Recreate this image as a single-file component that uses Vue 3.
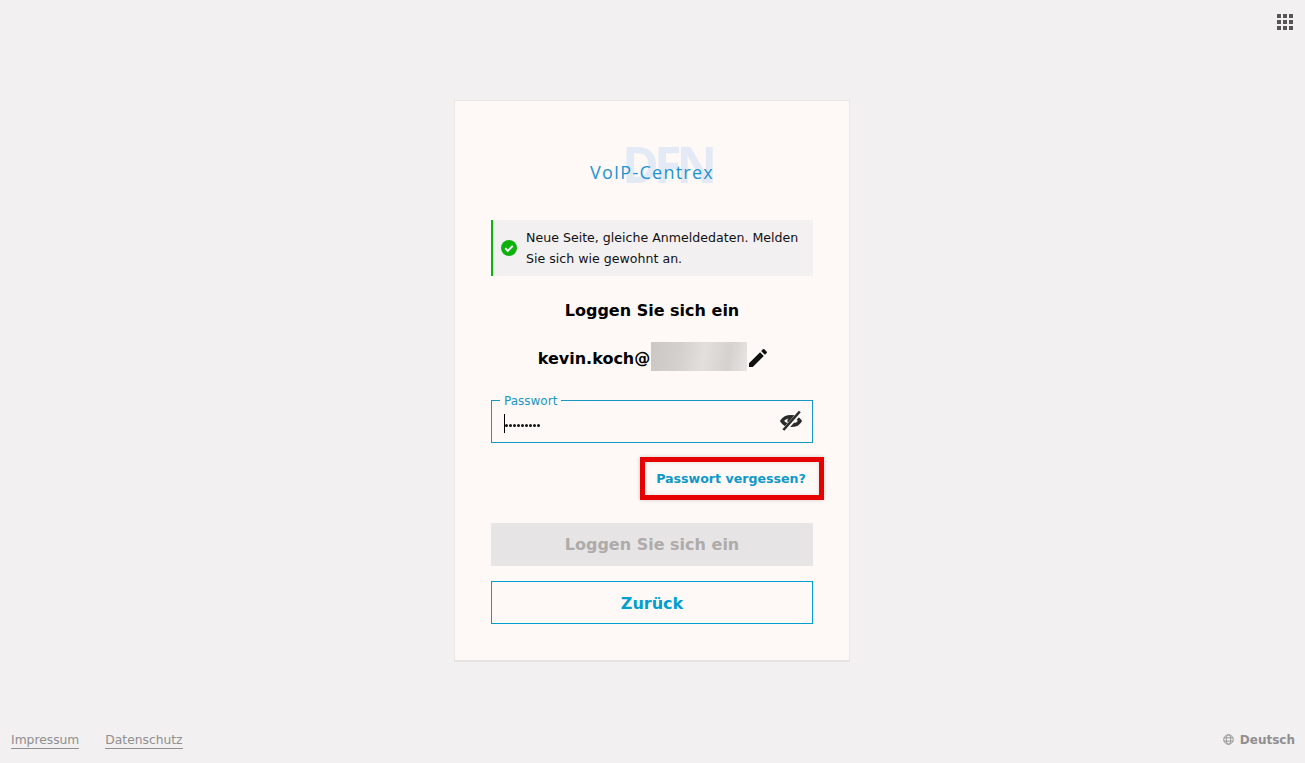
<template>
  <div class="page">
    <button class="apps" aria-label="Apps">
      <svg width="18" height="18" viewBox="0 0 18 18"><rect v-for="c in appCells" :key="c.k" :x="c.x" :y="c.y" width="4" height="4" fill="#555" /></svg>
    </button>

    <main class="card">
      <div class="logo">
        <span class="logo-dfn">DFN</span>
        <span class="logo-name">VoIP-Centrex</span>
      </div>

      <div class="notice">
        <svg class="notice-icon" width="16" height="16" viewBox="0 0 16 16">
          <circle cx="8" cy="8" r="8" fill="#0fb10f" />
          <path d="M4.2 8.2l2.6 2.6 5-5" fill="none" stroke="#fff" stroke-width="1.9" />
        </svg>
        <p>Neue Seite, gleiche Anmeldedaten. Melden Sie sich wie gewohnt an.</p>
      </div>

      <h1>Loggen Sie sich ein</h1>

      <div class="user">
        <span class="user-name">kevin.koch@</span>
        <span class="blur"></span>
        <svg class="edit" width="24" height="24" viewBox="0 0 24 24">
          <path d="M3 17.25V21h3.75L17.81 9.94l-3.75-3.75L3 17.25zM20.71 7.04a1 1 0 0 0 0-1.41l-2.34-2.34a1 1 0 0 0-1.41 0l-1.83 1.83 3.75 3.75 1.83-1.83z" fill="#111" />
        </svg>
      </div>

      <fieldset class="field">
        <legend>Passwort</legend>
        <span class="caret"></span>
        <span class="dots">
          <i v-for="n in 9" :key="n"></i>
        </span>
        <svg class="eye" width="24" height="24" viewBox="0 0 24 24">
          <path d="M3 12C6.5 6.2 17.5 6.2 21 12 17.5 17.8 6.5 17.8 3 12Z" fill="none" stroke="#2a2a2a" stroke-width="3.4" />
          <circle cx="12" cy="12" r="3.6" fill="#2a2a2a" />
          <path d="M21.5 3L5 21.5" stroke="#fef9f6" stroke-width="4.6" />
          <path d="M20.8 2.5L4.4 21" stroke="#2a2a2a" stroke-width="2.6" />
        </svg>
      </fieldset>

      <div class="forgot-row">
        <a class="forgot" href="#">Passwort vergessen?</a>
      </div>

      <button class="btn btn-disabled" disabled>Loggen Sie sich ein</button>
      <button class="btn btn-back">Zurück</button>
    </main>

    <footer class="footer">
      <div class="links">
        <a href="#">Impressum</a>
        <a href="#">Datenschutz</a>
      </div>
      <div class="lang">
        <svg width="11" height="11" viewBox="0 0 12 12" fill="none" stroke="#8f8f8f" stroke-width="1">
          <circle cx="6" cy="6" r="5.2" />
          <ellipse cx="6" cy="6" rx="2.4" ry="5.2" />
          <path d="M1 4.2h10M1 7.8h10" />
        </svg>
        <span>Deutsch</span>
      </div>
    </footer>
  </div>
</template>

<script setup>
const appCells = []
for (let r = 0; r < 3; r++) {
  for (let c = 0; c < 3; c++) {
    appCells.push({ k: `${r}-${c}`, x: 1 + c * 6, y: 1 + r * 6 })
  }
}
</script>

<style>
body {
  margin: 0;
  background: #f2f0f1;
}
</style>

<style scoped>
.page {
  position: relative;
  height: 763px;
  overflow: hidden;
  display: flex;
  flex-direction: column;
  align-items: center;
  padding-top: 100px;
  box-sizing: border-box;
  font-family: "DejaVu Sans", Verdana, sans-serif;
  color: #000;
}

.apps {
  position: absolute;
  top: 13px;
  right: 11px;
  padding: 0;
  border: 0;
  background: none;
  line-height: 0;
}

.card {
  width: 396px;
  height: 562px;
  margin-right: 1px;
  box-sizing: border-box;
  padding: 0 36px;
  background: #fef9f6;
  border: 1px solid #e9e7e7;
  border-bottom: 2px solid #e4e2e2;
}

.logo {
  position: relative;
  height: 119px;
}

.logo-dfn {
  position: absolute;
  top: 35px;
  left: 131px;
  font-family: "Open Sans", sans-serif;
  font-size: 50px;
  line-height: 56px;
  font-weight: 700;
  letter-spacing: -5px;
  color: #e4eaf5;
}

.logo-name {
  position: absolute;
  top: 59px;
  left: 99px;
  font-family: "Open Sans", sans-serif;
  font-size: 18px;
  line-height: 24px;
  letter-spacing: 1.25px;
  color: #1f94d2;
}

.notice {
  display: flex;
  align-items: center;
  gap: 9px;
  height: 56px;
  box-sizing: border-box;
  padding: 0 8px;
  background: #f2f0f1;
  border-left: 2px solid #0fb10f;
}

.notice-icon {
  flex: none;
}

.notice p {
  margin: 0;
  font-size: 12.6px;
  line-height: 21px;
  color: #111;
}

h1 {
  margin: 25px 0 0;
  font-size: 16px;
  line-height: 20px;
  font-weight: 700;
  text-align: center;
}

.user {
  display: flex;
  align-items: center;
  justify-content: center;
  height: 29px;
  margin: 21px 0 0 4px;
  font-size: 16px;
  font-weight: 700;
}

.user-name {
  padding-top: 3px;
}

.blur {
  width: 96px;
  height: 29px;
  margin-left: 1px;
  background: linear-gradient(100deg, #cbc7c4 0%, #d4d0cd 30%, #e2dfdc 55%, #d5d1ce 80%, #e9e5e2 100%);
}

.edit {
  margin: 2px 0 0 -1px;
}

.field {
  position: relative;
  height: 50px;
  margin: 22px 0 0;
  padding: 0;
  box-sizing: border-box;
  border: 1px solid #1a96c4;
  min-width: 0;
}

.field legend {
  margin-left: 8px;
  padding: 0 4px;
  font-size: 12px;
  line-height: 14px;
  color: #1a96c4;
  transform: translateY(1px);
}

.caret {
  position: absolute;
  left: 12px;
  top: 7px;
  width: 1px;
  height: 19px;
  background: #000;
}

.dots {
  position: absolute;
  left: 13px;
  top: 17px;
  display: flex;
  gap: 1px;
}

.dots i {
  width: 3px;
  height: 3px;
  background: #111;
  border-radius: 50%;
}

.eye {
  position: absolute;
  right: 9px;
  top: 2px;
}

.forgot-row {
  display: flex;
  justify-content: flex-end;
  margin: 14px -11px 0 0;
}

.forgot {
  display: block;
  width: 184px;
  height: 43px;
  padding-right: 2px;
  box-sizing: border-box;
  border: 5px solid #e60000;
  font-size: 12.6px;
  line-height: 33px;
  font-weight: 700;
  text-align: center;
  text-decoration: none;
  color: #0e98c8;
  box-shadow: 0 0 4px rgba(0, 0, 0, 0.18), inset 0 0 4px rgba(0, 0, 0, 0.12);
}

.btn {
  display: block;
  width: 100%;
  height: 43px;
  padding: 0;
  box-sizing: border-box;
  font-family: inherit;
  font-size: 16px;
  font-weight: 700;
}

.btn-disabled {
  margin-top: 23px;
  border: 0;
  background: #e6e4e4;
  color: #aeabaa;
}

.btn-back {
  margin-top: 15px;
  padding-top: 1px;
  border: 1px solid #009fd2;
  background: none;
  color: #009fd2;
}

.footer {
  position: absolute;
  left: 11px;
  right: 10px;
  bottom: 14px;
  display: flex;
  justify-content: space-between;
  align-items: center;
  font-size: 12.3px;
  color: #8f8f8f;
}

.links {
  display: flex;
  gap: 26px;
}

.links a {
  color: #8f8f8f;
  text-decoration: none;
  border-bottom: 1px solid #8f8f8f;
  line-height: 16px;
}

.lang {
  display: flex;
  align-items: center;
  gap: 6px;
  margin-bottom: 2px;
  font-size: 12px;
  font-weight: 700;
  color: #8f8f8f;
}
</style>
